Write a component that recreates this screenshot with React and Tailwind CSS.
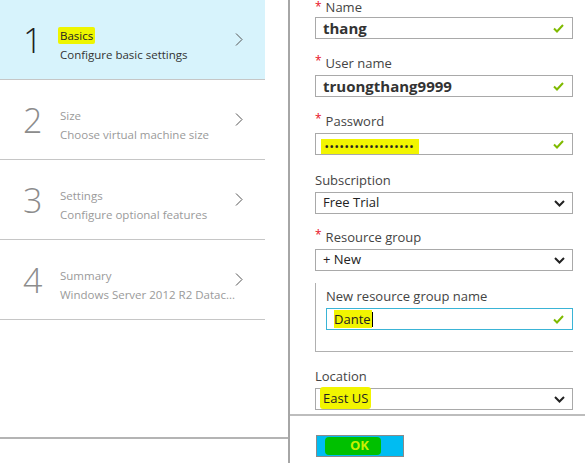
import React from "react";

const font = { fontFamily: '"Open Sans", "Noto Sans", Arial, sans-serif' };

function Chevron() {
  return (
    <svg width="8" height="13" viewBox="0 0 8 13" className="shrink-0">
      <polyline points="1,0.5 7,6.5 1,12.5" fill="none" stroke="#555" strokeWidth="1" />
    </svg>
  );
}

function Check() {
  return (
    <svg width="11" height="9" viewBox="0 0 11 9" className="shrink-0">
      <polyline points="1,4.5 4,7.5 10,1" fill="none" stroke="#7fba00" strokeWidth="2" />
    </svg>
  );
}

function Down() {
  return (
    <svg width="11" height="7" viewBox="0 0 11 7" className="shrink-0">
      <polyline points="1,1 5.5,5.5 10,1" fill="none" stroke="#222" strokeWidth="2" />
    </svg>
  );
}

function Step({ n, title, sub, active }) {
  return (
    <div
      className={`h-[80px] w-[265px] border-b border-[#c6c6c6] flex items-center pl-[23px] pr-[22px] ${
        active ? "bg-[#d7f3fc]" : "bg-white"
      }`}
    >
      <div
        className={`w-[37px] shrink-0 text-[34px] leading-[34px] font-light ${
          active ? "text-[#1e1e1e]" : "text-[#8c8c8c]"
        }`}
      >
        {n}
      </div>
      <div className="flex-1 min-w-0 flex flex-col mt-[10px]">
        <div className={`text-[11.5px] leading-[19px] ${active ? "text-[#222]" : "text-[#9a9a9a]"}`}>
          {active ? (
            <span className="bg-[#eef500] px-[2px] py-[1px] ml-[-2px] rounded-[2px]">{title}</span>
          ) : (
            title
          )}
        </div>
        <div className={`text-[11.5px] leading-[19px] whitespace-nowrap ${active ? "text-[#333]" : "text-[#9a9a9a]"}`}>
          {sub}
        </div>
      </div>
      <Chevron />
    </div>
  );
}

function Label({ children, req, h = "h-[36px]" }) {
  return (
    <div className={`${h} flex items-end pb-[4px] text-[13px] leading-[16px] text-[#444]`}>
      {req && <span className="text-[#e81123] text-[12px] mr-[4px] leading-[12px] self-start mt-[auto] mb-[4px]">*</span>}
      {children}
    </div>
  );
}

function TextBox({ children, border = "border-[#a9a9a9]", w = "w-[258px]" }) {
  return (
    <div className={`${w} h-[22px] border ${border} bg-white flex items-center pl-[7px] pr-[8px]`}>
      <div className="flex-1 min-w-0">{children}</div>
      <Check />
    </div>
  );
}

function Select({ children }) {
  return (
    <div className="w-[258px] h-[22px] border border-[#a9a9a9] bg-white flex items-center pl-[7px] pr-[7px]">
      <div className="flex-1 text-[13px] text-[#222]">{children}</div>
      <Down />
    </div>
  );
}

export default function App() {
  return (
    <div className="w-[585px] h-[463px] bg-white flex overflow-hidden" style={font}>
      {/* Left */}
      <div className="w-[290px] h-full border-r-2 border-[#a6a6a6] flex flex-col">
        <Step n="1" title="Basics" sub="Configure basic settings" active />
        <Step n="2" title="Size" sub="Choose virtual machine size" />
        <Step n="3" title="Settings" sub="Configure optional features" />
        <Step n="4" title="Summary" sub="Windows Server 2012 R2 Datac..." />
        <div className="h-[119px] border-b-2 border-[#b4b4b4]" />
      </div>

      {/* Right */}
      <div className="flex-1 flex flex-col">
        <div className="pl-[25px] flex flex-col">
          <div className="h-[17px] flex items-start text-[13px] leading-[14px] text-[#444]">
            <span className="text-[#e81123] text-[12px] mr-[4px]">*</span>Name
          </div>
          <div>
            <TextBox>
              <span className="text-[15px] font-bold text-[#333]">thang</span>
            </TextBox>
          </div>
          <Label req>User name</Label>
          <TextBox>
            <span className="text-[15px] font-bold text-[#333]">truongthang9999</span>
          </TextBox>
          <Label req>Password</Label>
          <TextBox>
            <span className="bg-[#f2f500] inline-flex items-center h-[15px] px-[4px] ml-[-2px] text-[9px] tracking-[1.6px] text-[#222] font-bold leading-[15px]">
              ••••••••••••••••••
            </span>
          </TextBox>
          <Label h="h-[37px]">Subscription</Label>
          <Select>Free Trial</Select>
          <Label req h="h-[35px]">Resource group</Label>
          <Select>+ New</Select>
          <div className="mt-[12px] w-[258px] h-[69px] border-l border-b border-[#b0b0b0] pl-[10px] flex flex-col">
            <div className="h-[25px] flex items-end pb-[4px] text-[13px] leading-[16px] text-[#444]">
              New resource group name
            </div>
            <div className="w-[247px] h-[22px] border border-[#3ab4d6] bg-white flex items-center pl-[7px] pr-[8px]">
              <div className="flex-1 text-[13px] text-[#222] leading-[16px]">
                <span className="bg-[#f2f500] pr-[1px]">Dante</span>
                <span className="inline-block w-px h-[15px] bg-black align-[-3px]" />
              </div>
              <Check />
            </div>
          </div>
          <Label>Location</Label>
          <Select>
            <span className="bg-[#f2f500] px-[3px] ml-[-3px] py-[2px] rounded-[3px]">East US</span>
          </Select>
        </div>
        <div className="mt-[4px] border-t-2 border-[#bdbdbd]" />
        <div className="pl-[26px] mt-[19px]">
          <div className="w-[88px] h-[22px] bg-[#00bcf2] border border-[#8a8a8a] flex items-center pl-[8px]">
            <div className="w-[56px] h-[18px] bg-[#00c000] rounded-[4px] flex items-center justify-end pr-[12px] text-[13px] font-bold text-[#c8f000]">
              OK
            </div>
          </div>
        </div>
      </div>
    </div>
  );
}
